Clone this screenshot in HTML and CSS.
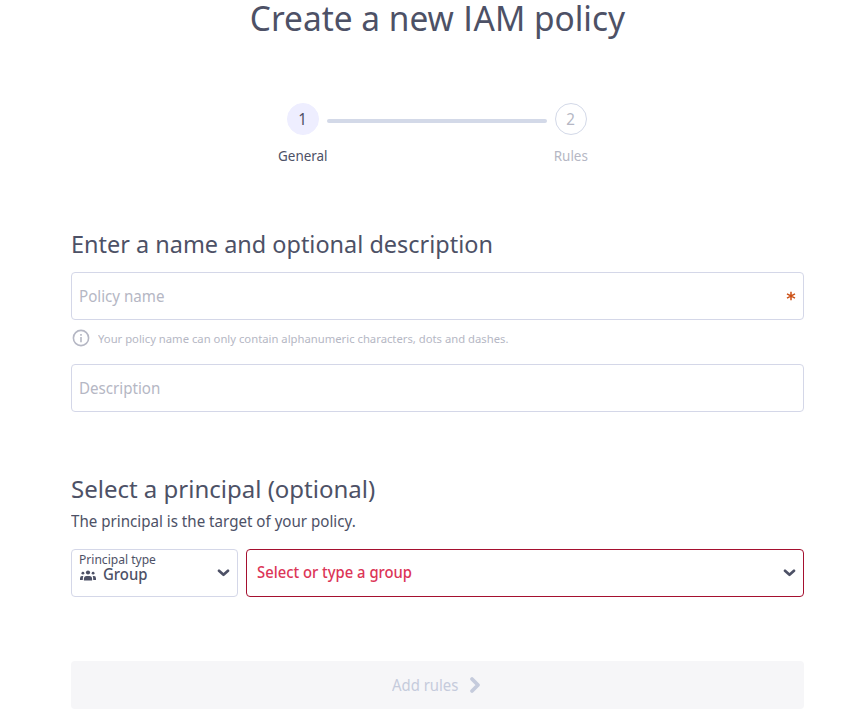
FILE: index.html
```
<!DOCTYPE html>
<html lang="en">
<head>
<meta charset="utf-8">
<title>Create a new IAM policy</title>
<link rel="stylesheet" href="styles.css">
</head>
<body>
<main class="page">
  <h1 class="title"><span class="fit">Create a new <span class="plain">I</span>AM policy</span></h1>
  <div class="stepper">
    <div class="step active"><span class="dot"><span class="fit">1</span></span><span class="label"><span class="fit">General</span></span></div>
    <span class="bar"></span>
    <div class="step"><span class="dot"><span class="fit">2</span></span><span class="label"><span class="fit">Rules</span></span></div>
  </div>
  <section>
    <h2><span class="fit">Enter a name and optional description</span></h2>
    <div class="field"><span class="placeholder fit">Policy name</span>
      <svg class="required" width="10" height="10" viewBox="0 0 10 10"><path d="M5 .7v8.6M1 2.9l8 4.2M9 2.9L1 7.1"/></svg>
    </div>
    <div class="hint">
      <svg width="18" height="18" viewBox="0 0 18 18"><circle cx="9" cy="9" r="7.6"/><path d="M9 8v5.2M9 4.9v1.8"/></svg>
      <span class="fit">Your policy name can only contain alphanumeric characters, dots and dashes.</span>
    </div>
    <div class="field"><span class="placeholder fit">Description</span></div>
  </section>
  <section class="principal">
    <h2><span class="fit">Select a principal (optional)</span></h2>
    <p><span class="fit">The principal is the target of your policy.</span></p>
    <div class="row">
      <div class="field type">
        <div class="stack">
          <span class="caption"><span class="fit">Principal type</span></span>
          <span class="value">
            <svg width="16" height="11" viewBox="0 0 16 11"><circle cx="8" cy="2.5" r="2.1"/><circle cx="2.9" cy="3.2" r="1.4"/><circle cx="13.1" cy="3.2" r="1.4"/><path d="M3.9 10.5V8.9q0-3 2.7-3h2.8q2.7 0 2.7 3v1.6zM0 9.9V8.4q0-2.4 2-2.4h1.3Q2.8 7 2.8 9.9zM16 9.9V8.4q0-2.4-2-2.4h-1.3q.5 1 .5 3.9z"/></svg>
            <span class="fit">Group</span>
          </span>
        </div>
        <svg class="chevron" width="13" height="8" viewBox="0 0 13 8"><path d="M2 1.8l4.5 4 4.5-4"/></svg>
      </div>
      <div class="field group">
        <span class="fit">Select or type a group</span>
        <svg class="chevron" width="13" height="8" viewBox="0 0 13 8"><path d="M2 1.8l4.5 4 4.5-4"/></svg>
      </div>
    </div>
  </section>
  <button class="submit" disabled><span class="fit">Add rules</span><svg width="12" height="18" viewBox="0 0 12 18"><path d="M3 3l6 6-6 6"/></svg></button>
</main>
</body>
</html>
```
FILE: styles.css
```
* { box-sizing: border-box; }
body {
  margin: 0;
  background: #fff;
  color: #4d5166;
  font-family: "Noto Sans", sans-serif;
  font-size: 16px;
  overflow: hidden;
}
h1, h2, p { margin: 0; font-weight: 400; }
svg { display: block; flex: none; fill: none; stroke: currentColor; }
.page { width: 733px; margin-left: 71px; }
.fit { display: inline-block; white-space: nowrap; transform: scaleX(.945); transform-origin: left; }

.title { height: 36px; line-height: 36px; font-size: 35px; text-align: center; }
.title .fit { transform: scaleX(.955); transform-origin: center; }
.plain { padding: 0 1px; font-family: Roboto, sans-serif; }

.stepper { display: flex; justify-content: center; margin-top: 67px; padding-right: 1px; height: 62px; }
.step { display: flex; flex-direction: column; align-items: center; width: 32px; color: #b5b7c4; }
.step .fit { transform-origin: center; }
.dot { display: flex; flex: none; align-items: center; justify-content: center; width: 32px; height: 32px; border: 1px solid #d3d9e8; border-radius: 50%; }
.label { margin-top: 11px; line-height: 20px; font-size: 14px; }
.label .fit { transform: scaleX(.96); }
.active { color: #4d5166; }
.active .dot { background: #eeeeff; border-color: #eeeeff; }
.bar { width: 220px; height: 4px; margin: 16px 8px 0; border-radius: 2px; background: #d3d9e8; }

section { margin-top: 64px; }
h2 { height: 30px; line-height: 30px; font-size: 24px; }
h2 .fit { transform: scaleX(.977); }
.field { display: flex; align-items: center; justify-content: space-between; height: 48px; padding: 0 7px; border: 1px solid #d4d7e8; border-radius: 4px; }
section h2 + .field { margin-top: 13px; }
.placeholder { color: #b5b7c4; }
.required { color: #cb5016; stroke-width: 1.5; }
.hint { display: flex; align-items: center; gap: 8px; height: 44px; padding-left: 1px; padding-bottom: 8px; color: #b5b7c4; font-size: 11.5px; }
.hint svg { stroke-width: 1.6; }
.hint .fit { transform: scaleX(.98); }

.principal { margin-top: 62px; }
.principal h2 .fit { transform: scaleX(1); }
p { height: 24px; line-height: 24px; margin-top: 5px; }
.row { display: flex; gap: 8px; margin-top: 16px; }
.type { width: 167px; }
.stack { display: flex; flex-direction: column; align-self: stretch; padding-top: 2px; }
.caption { height: 15px; line-height: 16px; font-size: 12.5px; }
.caption .fit { transform: scaleX(.965); }
.value { display: flex; align-items: center; gap: 7px; height: 17px; padding-left: 1px; line-height: 16px; font-weight: 500; }
.value svg { fill: currentColor; stroke: none; }
.value .fit { margin-top: -3px; transform: scaleX(.93); }
.chevron { color: #4d5166; stroke-width: 2.7; stroke-linecap: round; stroke-linejoin: round; }
.group { flex: 1; padding-left: 10px; border-color: #a5102f; color: #dc3557; font-weight: 500; }
.group .fit { margin-top: -2px; transform: scaleX(.925); }
.submit { display: flex; align-items: center; justify-content: center; gap: 6px; width: 733px; height: 48px; margin-top: 64px; padding: 0 2px 0 0; border: 0; border-radius: 4px; background: #f6f6f8; color: #c5cbdc; font: 16px "Noto Sans", sans-serif; }
.submit .fit { transform: scaleX(.93); }
.submit svg { stroke-width: 3.8; stroke-linecap: round; stroke-linejoin: round; }
```
